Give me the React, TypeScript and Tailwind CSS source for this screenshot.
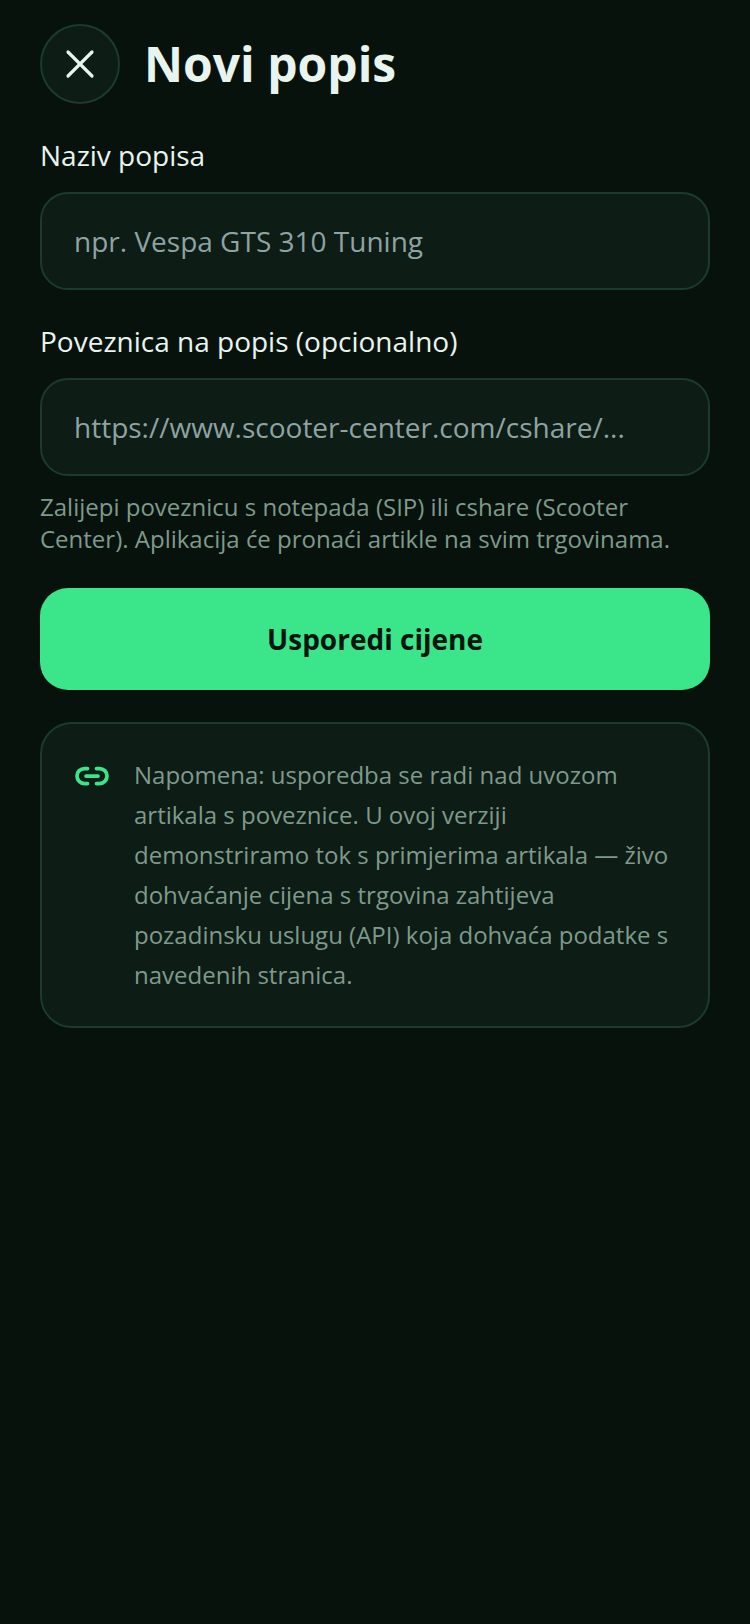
import { Link2, X } from "lucide-react";

const font = { fontFamily: '"Open Sans", sans-serif' };

function Field({ label, placeholder }: { label: string; placeholder: string }) {
  return (
    <div className="flex flex-col gap-[18px]">
      <label className="text-[28px] leading-[38px] text-[#e8f5ee]">{label}</label>
      <div className="flex h-[98px] items-center rounded-[28px] border-2 border-[#1c3a2d] bg-[#0d1c15] px-[32px]">
        <span className="text-[28px] text-[#8fa3a3]">{placeholder}</span>
      </div>
    </div>
  );
}

export default function App() {
  return (
    <div className="min-h-[1624px] bg-[#07120d] px-[40px] pt-[24px]" style={font}>
      <header className="flex items-center gap-[24px]">
        <button
          type="button"
          className="flex h-[80px] w-[80px] items-center justify-center rounded-full border-2 border-[#1c3a2d] bg-[#0d1c15] text-[#e8f5ee]"
        >
          <X size={48} strokeWidth={1.6} />
        </button>
        <h1 className="text-[48px] font-bold leading-[80px] text-[#e8f5ee]">Novi popis</h1>
      </header>

      <div className="mt-[32px] flex flex-col gap-[32px]">
        <Field label="Naziv popisa" placeholder="npr. Vespa GTS 310 Tuning" />
        <Field label="Poveznica na popis (opcionalno)" placeholder="https://www.scooter-center.com/cshare/..." />
      </div>

      <p className="mt-[15px] text-[24px] leading-[32px] text-[#7f9a8c]">
        Zalijepi poveznicu s notepada (SIP) ili cshare (Scooter Center). Aplikacija će pronaći artikle na svim trgovinama.
      </p>

      <button
        type="button"
        className="mt-[33px] h-[102px] w-full rounded-[28px] bg-[#3be58a] text-[28px] font-bold text-[#06140d]"
      >
        Usporedi cijene
      </button>

      <div className="mt-[32px] flex gap-[24px] rounded-[32px] border-2 border-[#1c3a2d] bg-[#0d1c15] px-[32px] py-[31px]">
        <Link2 size={36} strokeWidth={2.5} className="mt-[3px] shrink-0 text-[#3be58a]" />
        <p className="text-[24px] leading-[40px] text-[#7f9a8c]">
          Napomena: usporedba se radi nad uvozom artikala s poveznice. U ovoj verziji demonstriramo tok s primjerima artikala — živo dohvaćanje cijena s trgovina zahtijeva pozadinsku uslugu (API) koja dohvaća podatke s navedenih stranica.
        </p>
      </div>
    </div>
  );
}
